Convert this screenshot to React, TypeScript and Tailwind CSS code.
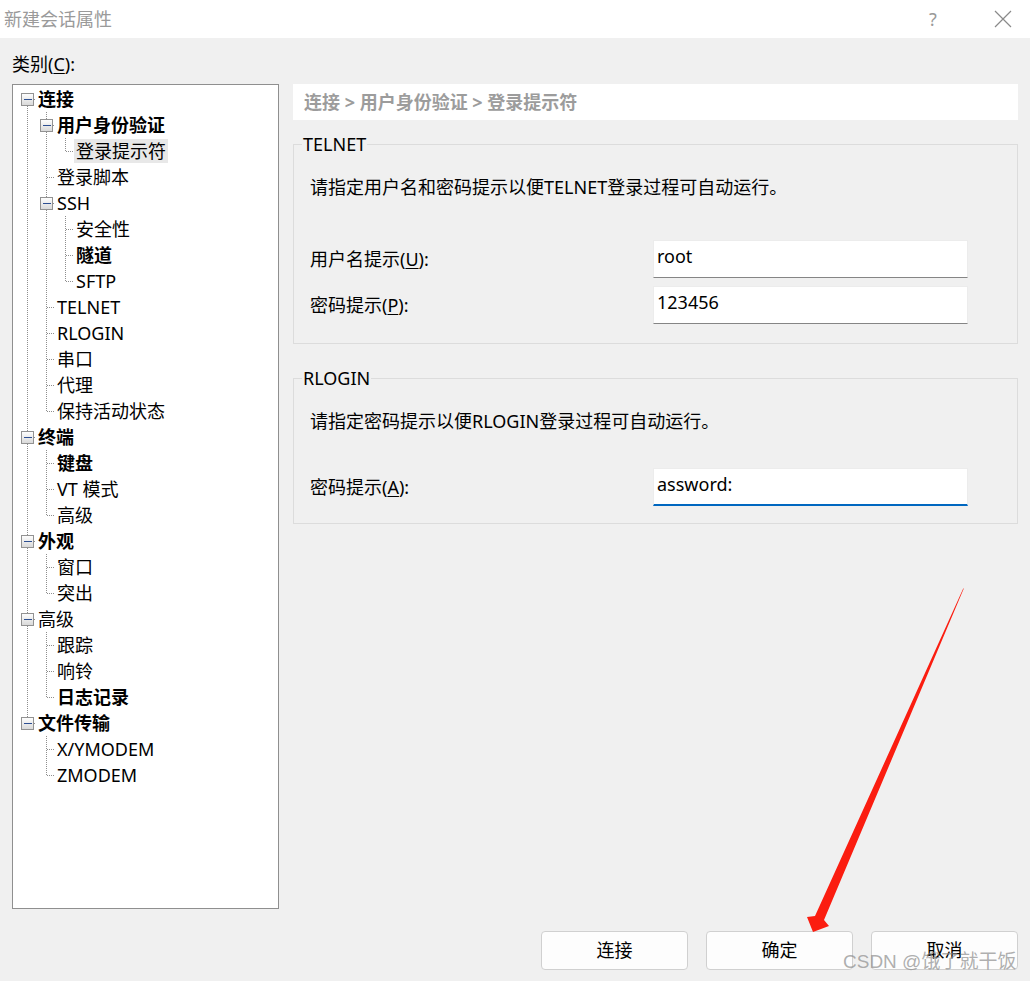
import React from "react";

type TreeNode = {
  label: string;
  bold?: boolean;
  selected?: boolean;
  children?: TreeNode[];
};

type Row = {
  node: TreeNode;
  depth: number;
  isLast: boolean;
  isFirstRoot: boolean;
  trail: boolean[];
};

const tree: TreeNode[] = [
  {
    label: "连接",
    bold: true,
    children: [
      {
        label: "用户身份验证",
        bold: true,
        children: [{ label: "登录提示符", selected: true }],
      },
      { label: "登录脚本" },
      {
        label: "SSH",
        children: [{ label: "安全性" }, { label: "隧道", bold: true }, { label: "SFTP" }],
      },
      { label: "TELNET" },
      { label: "RLOGIN" },
      { label: "串口" },
      { label: "代理" },
      { label: "保持活动状态" },
    ],
  },
  {
    label: "终端",
    bold: true,
    children: [{ label: "键盘", bold: true }, { label: "VT 模式" }, { label: "高级" }],
  },
  {
    label: "外观",
    bold: true,
    children: [{ label: "窗口" }, { label: "突出" }],
  },
  {
    label: "高级",
    children: [{ label: "跟踪" }, { label: "响铃" }, { label: "日志记录", bold: true }],
  },
  {
    label: "文件传输",
    bold: true,
    children: [{ label: "X/YMODEM" }, { label: "ZMODEM" }],
  },
];

function flatten(nodes: TreeNode[], depth: number, trail: boolean[], out: Row[]) {
  nodes.forEach((node, i) => {
    const isLast = i === nodes.length - 1;
    out.push({ node, depth, isLast, isFirstRoot: depth === 0 && i === 0, trail });
    if (node.children) flatten(node.children, depth + 1, [...trail, !isLast], out);
  });
  return out;
}

const rows = flatten(tree, 0, [], []);

const DOT = "#8e8e8e";

function Gutter({ row }: { row: Row }) {
  const w = (row.depth + 1) * 19 - 1;
  const cx = row.depth * 19 + 9.5;
  return (
    <svg width={w} height={26} className="shrink-0" shapeRendering="crispEdges">
      <defs>
        <linearGradient id="box" x1="0" y1="0" x2="0" y2="1">
          <stop offset="0" stopColor="#ffffff" />
          <stop offset="1" stopColor="#d8d8d8" />
        </linearGradient>
      </defs>
      {row.trail.map((cont, a) =>
        cont ? (
          <line key={a} x1={a * 19 + 9.5} y1={0} x2={a * 19 + 9.5} y2={26} stroke={DOT} strokeDasharray="1 1" />
        ) : null
      )}
      {!row.isFirstRoot && <line x1={cx} y1={0} x2={cx} y2={13} stroke={DOT} strokeDasharray="1 1" />}
      {!row.isLast && <line x1={cx} y1={14} x2={cx} y2={26} stroke={DOT} strokeDasharray="1 1" />}
      <line x1={cx} y1={13.5} x2={w} y2={13.5} stroke={DOT} strokeDasharray="1 1" />
      {row.node.children && (
        <g>
          <rect x={cx - 6} y={7.5} width={12} height={12} fill="url(#box)" stroke="#929292" />
          <line x1={cx - 3.5} y1={13.5} x2={cx + 4.5} y2={13.5} stroke="#2d4f92" />
        </g>
      )}
    </svg>
  );
}

function TextInput({ value, focused }: { value: string; focused?: boolean }) {
  return (
    <div
      className={
        focused
          ? "w-[315px] h-[38px] bg-white border border-[#ececec] border-b-2 border-b-[#0067c0] pl-[3px] pt-[2px] leading-[26px]"
          : "w-[315px] h-[38px] bg-white border border-[#ececec] border-b-[#858585] pl-[3px] pt-[2px] leading-[26px]"
      }
    >
      {value}
    </div>
  );
}

function Field({ label, hotkey, value, focused }: { label: string; hotkey: string; value: string; focused?: boolean }) {
  return (
    <div className="flex items-center">
      <div className="w-[343px] leading-[26px]">
        {label}(<span className="underline underline-offset-2">{hotkey}</span>):
      </div>
      <TextInput value={value} focused={focused} />
    </div>
  );
}

function Button({ label }: { label: string }) {
  return (
    <div className="w-[147px] h-[39px] bg-[#fdfdfd] border border-[#d0d0d0] rounded-[4px] flex items-center justify-center">
      {label}
    </div>
  );
}

export default function App() {
  return (
    <div className="relative w-[1030px] h-[981px] bg-[#f0f0f0] text-black text-[18px] font-['Noto_Sans','Noto_Sans_CJK_SC',sans-serif] overflow-hidden">
      {/* Title bar */}
      <div className="h-[38px] bg-white flex items-center">
        <div className="pl-[4px] text-[#9a9a9a] leading-[26px]">新建会话属性</div>
        <div className="ml-auto w-[14px] text-center text-[#9a9a9a] mr-[54px] leading-[26px]">?</div>
        <svg width="18" height="18" className="mr-[18px]" viewBox="0 0 18 18">
          <path d="M1 1 L17 17 M17 1 L1 17" stroke="#8a8a8a" strokeWidth="1.2" />
        </svg>
      </div>

      <div className="px-[12px] pt-[13px]">
        <div className="leading-[26px]">
          类别(<span className="underline underline-offset-2">C</span>):
        </div>

        <div className="flex mt-[7px]">
          {/* Category tree */}
          <div className="w-[267px] h-[825px] bg-white border border-[#8f8f8f] pl-[5px] pt-[1px]">
            {rows.map((row, i) => (
              <div key={i} className="flex h-[26px] items-center">
                <Gutter row={row} />
                <span
                  className={
                    (row.node.bold ? "font-bold " : "") +
                    (row.node.selected ? "bg-[#e8e8e8] h-[24px] leading-[24px] " : "leading-[26px] ") +
                    "px-[2px] whitespace-nowrap"
                  }
                >
                  {row.node.label}
                </span>
              </div>
            ))}
          </div>

          {/* Right panel */}
          <div className="ml-[14px] w-[725px]">
            <div className="h-[36px] bg-white pl-[11px] leading-[36px] font-bold text-[#9c9c9c]">
              连接 &gt; 用户身份验证 &gt; 登录提示符
            </div>

            <fieldset className="mt-[14px] border border-[#dcdcdc] px-[8px] pb-[19px]">
              <legend className="px-[1px] leading-[20px]">TELNET</legend>
              <div className="pl-[8px]">
                <div className="mt-[20px] leading-[26px]">请指定用户名和密码提示以便TELNET登录过程可自动运行。</div>
                <div className="mt-[40px] flex flex-col gap-[8px]">
                  <Field label="用户名提示" hotkey="U" value="root" />
                  <Field label="密码提示" hotkey="P" value="123456" />
                </div>
              </div>
            </fieldset>

            <fieldset className="mt-[24px] border border-[#dcdcdc] px-[8px] pb-[17px]">
              <legend className="px-[1px] leading-[20px]">RLOGIN</legend>
              <div className="pl-[8px]">
                <div className="mt-[20px] leading-[26px]">请指定密码提示以便RLOGIN登录过程可自动运行。</div>
                <div className="mt-[34px]">
                  <Field label="密码提示" hotkey="A" value="assword:" focused />
                </div>
              </div>
            </fieldset>
          </div>
        </div>

        {/* Buttons */}
        <div className="mt-[22px] flex justify-end gap-[18px]">
          <Button label="连接" />
          <Button label="确定" />
          <Button label="取消" />
        </div>
      </div>

      {/* Watermark */}
      <div className="absolute left-[843px] top-[949px] text-[19px] leading-[26px] text-[#8c8c8c]/70 font-['Liberation_Sans','Noto_Sans_CJK_SC',sans-serif] pointer-events-none">
        CSDN @饿了就干饭
      </div>

      {/* Red annotation arrow */}
      <svg className="absolute inset-0 pointer-events-none" width="1030" height="981">
        <polygon
          points="964,588 824,920 829,926 813,932 807,917 815,916 963,589"
          fill="#fb1d10"
        />
      </svg>
    </div>
  );
}
